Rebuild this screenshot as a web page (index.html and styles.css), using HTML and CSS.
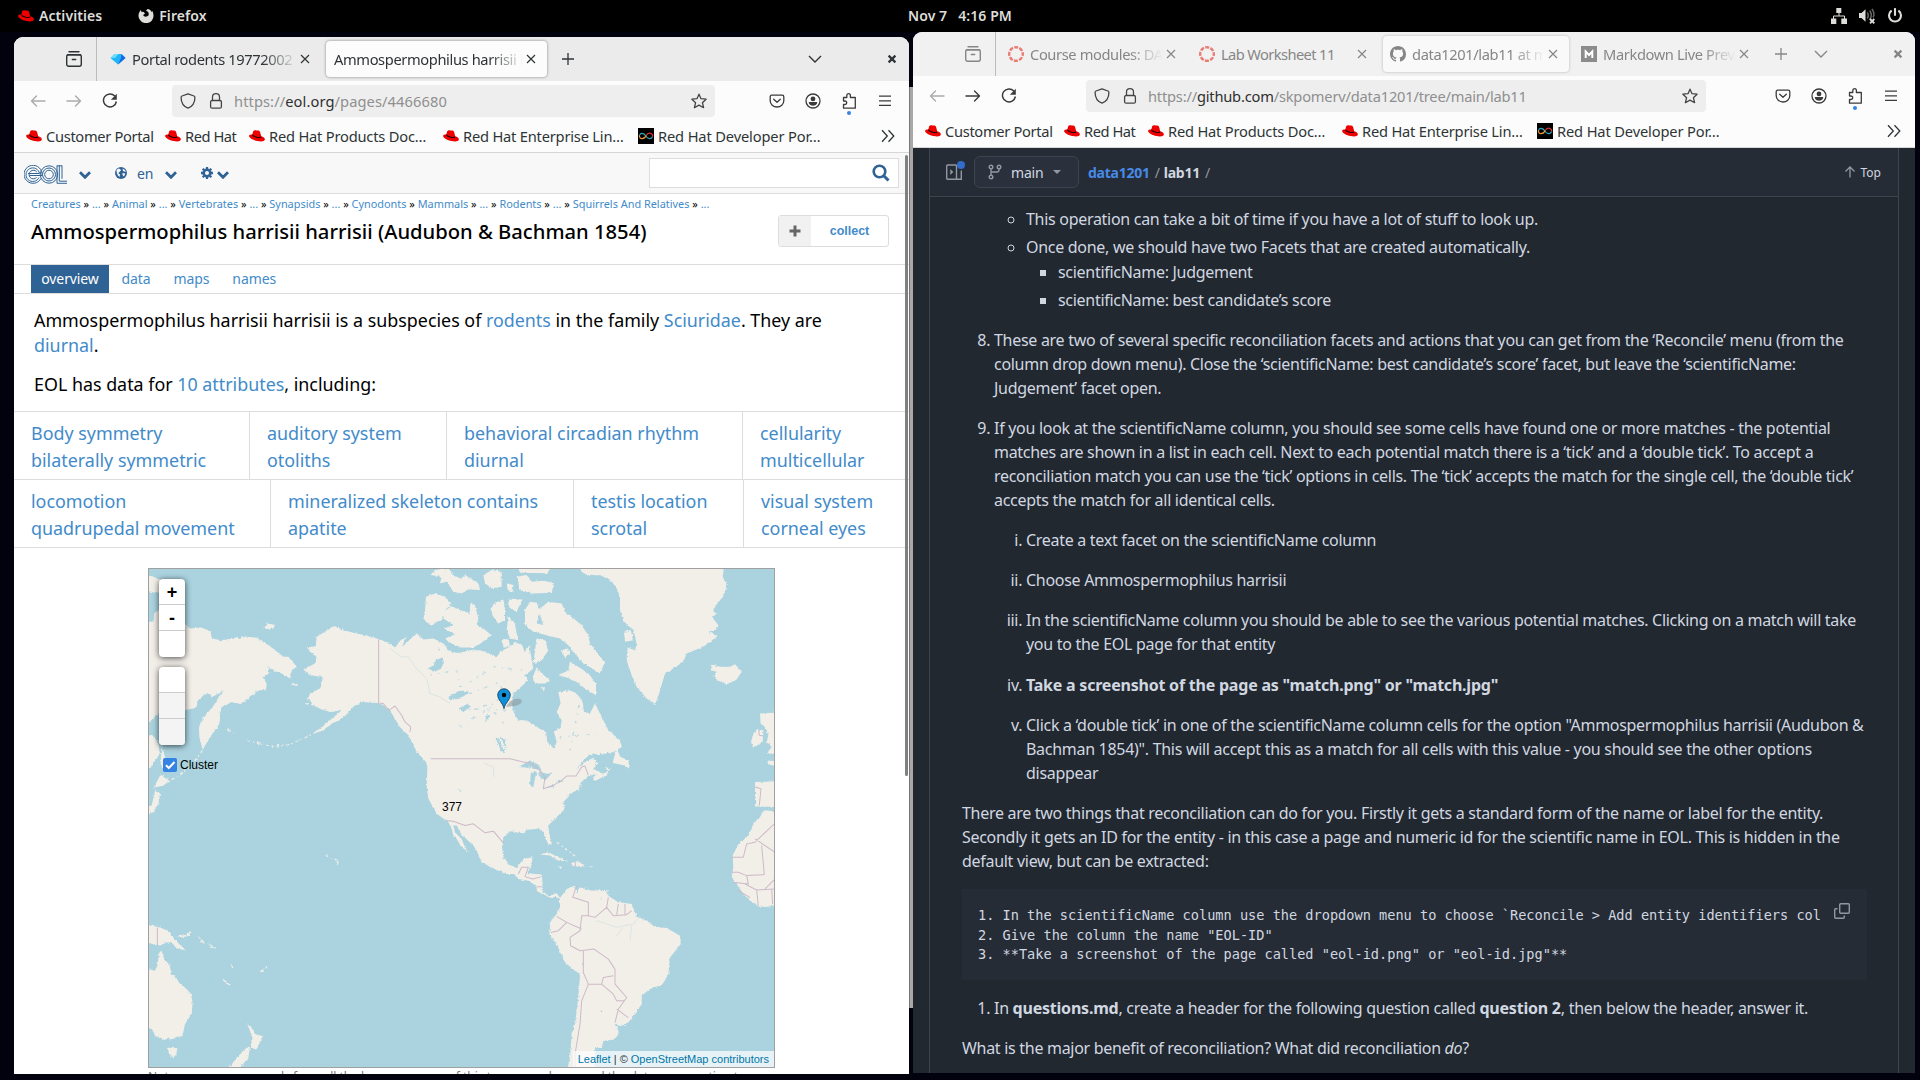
FILE: index.html
```
<!DOCTYPE html>
<html lang="en">
<head>
<meta charset="utf-8">
<title>Desktop</title>
<link rel="stylesheet" href="styles.css">
</head>
<body>
<svg class="defs" width="0" height="0" aria-hidden="true">
  <symbol id="hat" viewBox="0 0 16 16"><path fill="#e00" d="M4.2 3.3C5 2 6.300 2.200 7.600 2.600c1.200-.4 2.900-.1 3.500 1.300l1.100 4.300c2.200.6 3.800 1.900 3.700 3.400-.2 2-3.800 2.300-7.300 1.500C4.500 12.200.2 9.900.1 7.900 0 6.700 1.500 6.500 3.300 6.500z"/><path fill="none" stroke="#200" stroke-width="1.100" d="M3.300 6.700c.6 1.600 6.400 3.900 8.900 2.300"/></symbol>
  <symbol id="view" viewBox="0 0 16 16"><path fill="none" stroke="currentColor" stroke-width="1.400" stroke-linecap="round" d="M3 .8h10M1.500 3.700h13M6.300 8.500h3.400"/><rect x=".7" y="3.700" width="14.600" height="11.600" rx="2" fill="none" stroke="currentColor" stroke-width="1.400"/></symbol>
  <symbol id="x" viewBox="0 0 16 16"><path fill="none" stroke="currentColor" stroke-width="1.150" d="M4 4l8 8M12 4l-8 8"/></symbol>
  <symbol id="xb" viewBox="0 0 16 16"><path fill="none" stroke="currentColor" stroke-width="2.200" d="M4.600 4.600l6.800 6.800M11.400 4.600l-6.800 6.800"/></symbol>
  <symbol id="plus" viewBox="0 0 16 16"><path fill="none" stroke="currentColor" stroke-width="1.300" d="M8 2v12M2 8h12"/></symbol>
  <symbol id="chev" viewBox="0 0 16 16"><path fill="none" stroke="currentColor" stroke-width="1.400" d="M2 5l6 6 6-6"/></symbol>
  <symbol id="back" viewBox="0 0 16 16"><path fill="none" stroke="currentColor" stroke-width="1.400" stroke-linejoin="round" stroke-linecap="round" d="M15 8H1.500M6.500 3l-5 5 5 5"/></symbol>
  <symbol id="fwd" viewBox="0 0 16 16"><path fill="none" stroke="currentColor" stroke-width="1.400" stroke-linejoin="round" stroke-linecap="round" d="M1 8h13.500M9.500 3l5 5-5 5"/></symbol>
  <symbol id="reload" viewBox="0 0 16 16"><path fill="none" stroke="currentColor" stroke-width="1.500" d="M12.800 3A6.500 6.500 0 1 0 14.400 8.500"/><path fill="currentColor" d="M14.800.8v6.000H8.800z"/></symbol>
  <symbol id="shield" viewBox="0 0 16 16"><path fill="none" stroke="currentColor" stroke-width="1.300" stroke-linejoin="round" d="M8 .8l6 2.200c.8.3.9.8.9 1.500 0 4-1.700 8.700-6.900 10.700C2.800 13.200 1.100 8.500 1.100 4.500c0-.7.1-1.200.9-1.500z"/></symbol>
  <symbol id="lock" viewBox="0 0 16 16"><rect x="2.600" y="7.500" width="10.800" height="7.700" rx="1.500" fill="none" stroke="currentColor" stroke-width="1.300"/><path fill="none" stroke="currentColor" stroke-width="1.300" d="M4.500 7.500V4a3.500 3.300 0 0 1 7 0v3.500"/></symbol>
  <symbol id="star" viewBox="0 0 16 16"><path fill="none" stroke="currentColor" stroke-width="1.300" stroke-linejoin="round" d="M8 1.200l2 4.500 5.100.5-3.700 3.500 1.200 5L8 12.100l-4.600 2.600 1.200-5L.9 6.200 6 5.700z"/></symbol>
  <symbol id="pocket" viewBox="0 0 16 16"><path fill="none" stroke="currentColor" stroke-width="1.300" stroke-linecap="round" stroke-linejoin="round" d="M2.700 2.200h10.600c1 0 1.500.6 1.500 1.500v4a6.800 6.300 0 0 1-13.600 0v-4c0-.9.500-1.500 1.500-1.500zM4.700 6.200L8 9.300l3.300-3.100"/></symbol>
  <symbol id="acct" viewBox="0 0 16 16"><circle cx="8" cy="8" r="7" fill="none" stroke="currentColor" stroke-width="1.300"/><circle cx="8" cy="5.900" r="2.400" fill="currentColor"/><path fill="currentColor" d="M3.700 9.800c0-.5.300-.7.700-.7h7.200c.4 0 .7.200.7.700-.5 1.700-2.300 3-4.300 3s-3.800-1.300-4.300-3z"/></symbol>
  <symbol id="ext" viewBox="0 0 16 16"><path fill="none" stroke="currentColor" stroke-width="1.300" stroke-linejoin="round" d="M2.500 4.500h3.300V2.700a1.700 1.900 0 0 1 3.600 0v1.800h4.900v10.700H2.500v-3.700h1.400a1.800 1.700 0 0 0 0-3.500H2.500z"/></symbol>
  <symbol id="menu" viewBox="0 0 16 16"><path stroke="currentColor" stroke-width="1.300" d="M2 3.200h12M2 7.800h12M2 12.400h12"/></symbol>
  <symbol id="more" viewBox="0 0 16 16"><path fill="none" stroke="currentColor" stroke-width="1.300" d="M2 2.300l5.300 5.700L2 13.700M8.500 2.300l5.300 5.700-5.300 5.700"/></symbol>
  <symbol id="dev" viewBox="0 0 16 16"><path fill="#000" d="M0 0h16v16H0z"/><path fill="none" stroke="#d33" stroke-width="1.200" d="M8.200 7.500C9.500 5 11 5 12.500 5.300c1.600.5 2.400 2 2 3.400"/><path fill="none" stroke="#3ab" stroke-width="1.200" d="M8 8.300c1.500 2.700 5.800 3.300 6.500.4M1.500 7.500C2 4.700 5.800 4.500 8 8.300"/><path fill="none" stroke="#e93" stroke-width="1.200" d="M1.400 7.300c-.2 4.400 4.800 4.500 6.800.2"/></symbol>
  <symbol id="canvas" viewBox="0 0 16 16"><circle cx="8" cy="8" r="6.800" fill="none" stroke="#ea7c76" stroke-width="2.400" stroke-dasharray="4 1.340" stroke-dashoffset="2"/></symbol>
  <symbol id="github" viewBox="0 0 16 16"><path fill="currentColor" d="M8 0C3.580 0 0 3.580 0 8c0 3.540 2.290 6.530 5.470 7.590.4.070.55-.17.55-.38 0-.19-.01-.82-.01-1.490-2.010.37-2.530-.49-2.690-.94-.09-.23-.48-.94-.82-1.130-.28-.15-.68-.52-.01-.53.63-.01 1.080.58 1.230.82.72 1.210 1.870.87 2.330.66.07-.52.28-.87.51-1.070-1.780-.2-3.640-.89-3.640-3.950 0-.87.31-1.590.82-2.150-.08-.2-.36-1.020.08-2.120 0 0 .67-.21 2.200.82.64-.18 1.320-.27 2-.27s1.360.09 2 .27c1.530-1.040 2.200-.82 2.200-.82.44 1.100.16 1.920.08 2.120.51.56.82 1.270.82 2.150 0 3.070-1.870 3.750-3.650 3.950.29.25.54.73.54 1.480 0 1.070-.01 1.930-.01 2.200 0 .21.15.46.55.38A8.010 8.010 0 0 0 16 8c0-4.420-3.580-8-8-8z"/></symbol>
  <symbol id="fachev" viewBox="0 0 12 8"><path fill="none" stroke="currentColor" stroke-width="2.800" d="M1 1.300l5 5 5-5"/></symbol>
</svg>

<header class="topbar">
  <div class="tb-left"><svg class="i16"><use href="#hat"/></svg><span>Activities</span>
    <svg class="i16 fox" viewBox="0 0 16 16"><path fill="#deddda" d="M2.500 2l1 1.800 2.300.2L7 5.500 5.200 7c.5 2 3.800 2.300 5.200.6C11.500 5 9.800 3.200 8 2.800L9.500.9c2 .3 3.600 1.300 4 3l.9-.8c1.700 3.300 1.500 7-1 9.800a7.600 7.600 0 0 1-12.300-2.300C0 8 .5 5.500 1.500 4z"/></svg><span>Firefox</span></div>
  <div class="tb-mid"><span>Nov 7</span><span>4:16 PM</span></div>
  <div class="tb-right">
    <svg class="i16" viewBox="0 0 16 16"><path fill="#deddda" d="M5.300 0h5v5h-5zM0 10.500h5.300V16H0zM10.300 10.500H16V16h-5.700z"/><path fill="none" stroke="#deddda" d="M8 5v3M2.500 11V8h11v3"/></svg>
    <svg class="i16" viewBox="0 0 16 16"><path fill="#deddda" d="M0 5h2.500L6.500 1.200v12.500L2.500 10H0z"/><path fill="none" stroke="#666" stroke-width="1.500" d="M8.300 4.500c1.300 2 1.300 4 0 6M10.700 2.500c2 3 2 6.500 0 9.500M13 .8c2.200 3.500 2 7 1 8.500"/><path stroke="#deddda" stroke-width="1.800" d="M11 11l4.300 4.300M15.300 11L11 15.300"/></svg>
    <svg class="i16" viewBox="0 0 16 16"><path fill="none" stroke="#deddda" stroke-width="2.100" stroke-linecap="round" d="M4 3.100a6 6 0 1 0 8 0M8 1v6"/></svg>
  </div>
</header>

<div class="under"></div>

<section class="win w-left">
  <div class="tabs">
    <div class="view"><svg class="i16"><use href="#view"/></svg></div>
    <div class="tab"><svg class="i16" viewBox="0 0 16 16"><path fill="#1fb6f8" d="M4.500 3h7l4 4L8 13.500.500 7z"/><path fill="#1668e8" d="M11.500 3l4 4L8 13.500 11 7z"/><path fill="#6fdcff" d="M4.500 3h4L5 7H.5z"/></svg><span class="tt">Portal rodents 19772002 scinames</span><svg class="i16"><use href="#x"/></svg></div>
    <div class="tab on"><span class="tt">Ammospermophilus harrisii harrisii</span><svg class="i16"><use href="#x"/></svg></div>
    <svg class="i16 newtab"><use href="#plus"/></svg>
    <div class="ctl"><svg class="i16"><use href="#chev"/></svg><svg class="i16"><use href="#xb"/></svg></div>
  </div>
  <div class="nav">
    <svg class="i16 dim"><use href="#back"/></svg><svg class="i16 dim"><use href="#fwd"/></svg><svg class="i16"><use href="#reload"/></svg>
    <div class="url"><svg class="i16"><use href="#shield"/></svg><svg class="i16"><use href="#lock"/></svg><span>https://<b>eol.org</b>/pages/4466680</span><svg class="i16"><use href="#star"/></svg></div>
    <div class="tools"><svg class="i16"><use href="#pocket"/></svg><svg class="i16"><use href="#acct"/></svg><span class="dot"><svg class="i16"><use href="#ext"/></svg></span><svg class="i16"><use href="#menu"/></svg></div>
  </div>
  <div class="marks">
    <svg class="i16"><use href="#hat"/></svg><span class="m1">Customer Portal</span><svg class="i16"><use href="#hat"/></svg><span class="m2">Red Hat</span><svg class="i16"><use href="#hat"/></svg><span class="m3">Red Hat Products Doc…</span><svg class="i16"><use href="#hat"/></svg><span class="m4">Red Hat Enterprise Lin…</span><svg class="i16"><use href="#dev"/></svg><span class="m5">Red Hat Developer Por…</span><svg class="i16 more"><use href="#more"/></svg>
  </div>
  <main class="eol">
    <div class="eol-top">
      <svg class="logo" viewBox="0 0 43 19" fill="none" stroke="#2f6395"><g stroke-width="1"><path d="M17 13.500A9 9 0 1 1 18 8.500v2H5.500"/><path d="M15 12.500A6.800 6.800 0 1 1 15.500 8.500H4"/><path d="M12.500 12.500A4.300 4.300 0 1 1 12.800 7"/><circle cx="25" cy="9.500" r="8.700"/><circle cx="25" cy="9.500" r="6.500"/><circle cx="25" cy="9.500" r="4.300"/><path d="M33 .5v17.800h10M35.300.5v15.700H43M38 .5v13.300M33 .8h5"/></g></svg>
      <svg class="fc c1"><use href="#fachev"/></svg>
      <svg class="globe" viewBox="0 0 12 12"><circle cx="6" cy="6" r="6" fill="#2f6395"/><path fill="#f8f8f8" d="M1.500 3l2-1.500 1.500.5 1 1.200L4.500 5 3.200 6 5 7.500 4.500 10 3 8.500 1.800 6zM7.500 1.500l2.500 1.500.8 2-1.500-.5L8 4zM7.500 6l2.800.5L9 9.500 7.500 8z"/></svg>
      <span class="en">en</span>
      <svg class="fc c2"><use href="#fachev"/></svg>
      <svg class="gear" viewBox="0 0 12 12"><circle cx="6" cy="6" r="3.300" fill="none" stroke="#2f6395" stroke-width="2.600"/><path stroke="#2f6395" stroke-width="2.300" d="M6 0v2M6 10v2M0 6h2M10 6h2M1.700 1.700l1.400 1.400M8.900 8.900l1.400 1.400M10.300 1.700L8.900 3.100M3.100 8.900l-1.400 1.400"/></svg>
      <svg class="fc c3"><use href="#fachev"/></svg>
      <div class="search"><svg width="18" height="18" viewBox="0 0 18 18" fill="none" stroke="#2f6395"><circle cx="7.500" cy="7.500" r="5.800" stroke-width="2.600"/><path stroke-width="3" d="M11.500 11.500l5 5"/></svg></div>
    </div>
    <p class="crumbs"><a>Creatures</a> » <a>...</a> » <a>Animal</a> » <a>...</a> » <a>Vertebrates</a> » <a>...</a> » <a>Synapsids</a> » <a>...</a> » <a>Cynodonts</a> » <a>Mammals</a> » <a>...</a> » <a>Rodents</a> » <a>...</a> » <a>Squirrels And Relatives</a> » <a>...</a></p>
    <div class="title"><h1>Ammospermophilus harrisii harrisii (Audubon &amp; Bachman 1854)</h1>
      <div class="collect"><span class="cp"><svg width="12" height="12" viewBox="0 0 12 12"><path stroke="#666" stroke-width="3" d="M6 .5v11M.5 6h11"/></svg></span><span class="cl">collect</span></div></div>
    <nav class="sub"><a class="cur">overview</a><a>data</a><a>maps</a><a>names</a></nav>
    <div class="brief"><p>Ammospermophilus harrisii harrisii is a subspecies of <a>rodents</a> in the family <a>Sciuridae</a>. They are<br><a>diurnal</a>.</p><p>EOL has data for <a>10 attributes</a>, including:</p></div>
    <div class="traits r1"><div>Body symmetry<br>bilaterally symmetric</div><div>auditory system<br>otoliths</div><div>behavioral circadian rhythm<br>diurnal</div><div>cellularity<br>multicellular</div></div>
    <div class="traits r2"><div>locomotion<br>quadrupedal movement</div><div>mineralized skeleton contains<br>apatite</div><div>testis location<br>scrotal</div><div>visual system<br>corneal eyes</div></div>
    <div class="map">
      <svg class="land" viewBox="27 27 1875 1491" preserveAspectRatio="none">
        <defs><filter id="coast" x="-5%" y="-5%" width="110%" height="110%"><feTurbulence type="fractalNoise" baseFrequency=".14" numOctaves="3" seed="4"/><feDisplacementMap in="SourceGraphic" scale="9" xChannelSelector="R" yChannelSelector="G"/></filter></defs>
        <g filter="url(#coast)">
        <g fill="#f2efe9">
          <path d="M0 190L40 185 42 160 60 150 135 192 150 205 185 202 212 215 215 235 245 240 280 235 290 228 300 240 305 228 350 233 395 262 430 290 445 290 470 320 455 330 450 355 425 340 400 330 385 318 388 340 370 350 380 372 378 388 350 392 325 415 300 432 275 425 262 432 245 440 240 462 238 490 225 510 205 540 188 568 178 530 177 500 190 470 215 445 240 405 252 390 235 400 215 412 210 400 190 405 172 425 170 442 135 450 60 455 0 510z"/>
          <path d="M0 40L40 50 62 60 65 95 40 98 0 85zM0 535L40 525 55 550 60 580 45 600 35 620 0 640zM65 555L78 600 75 635 62 610zM62 642L88 662 70 675 42 682 55 655zM45 692L60 700 55 730 40 755 20 762 0 790 0 745 35 735zM372 200L385 190 405 195 400 205 378 207zM455 368l20 5-2 5-20-5zM495 430l12-2-2 8z"/>
          <path d="M500 262L527 258 530 230 560 212 583 198 610 210 640 218 690 228 718 238 740 245 765 262 782 240 800 228 785 258 800 248 830 218 850 238 880 235 910 250 925 270 940 278 960 278 990 270 1020 270 1050 282 1070 290 1085 272 1110 260 1125 245 1145 255 1155 275 1168 255 1175 300 1180 325 1155 345 1165 360 1145 378 1120 400 1115 430 1122 460 1135 480 1160 480 1200 505 1218 515 1222 545 1242 565 1250 545 1242 515 1262 500 1265 480 1250 455 1262 430 1255 395 1290 390 1310 400 1328 425 1332 455 1350 460 1365 430 1385 470 1405 510 1440 540 1445 560 1420 575 1390 580 1350 582 1330 600 1310 628 1335 605 1360 592 1372 610 1360 625 1390 640 1408 630 1398 645 1365 662 1358 652 1372 640 1345 647 1322 667 1320 685 1290 700 1270 725 1275 745 1245 775 1225 795 1228 820 1235 850 1225 852 1210 815 1195 805 1160 808 1150 818 1110 812 1090 830 1086 860 1090 890 1105 912 1130 922 1150 895 1177 890 1175 915 1162 938 1205 942 1208 965 1205 990 1225 1005 1250 998 1260 1012 1280 985 1305 975 1310 998 1320 978 1350 990 1395 988 1405 1005 1435 1025 1475 1030 1490 1068 1520 1080 1545 1098 1580 1102 1620 1125 1622 1150 1590 1190 1585 1240 1565 1275 1535 1280 1505 1305 1505 1330 1480 1365 1460 1390 1440 1395 1423 1390 1435 1405 1435 1420 1425 1435 1390 1440 1385 1460 1365 1462 1365 1560 1275 1560 1290 1490 1295 1420 1305 1390 1315 1310 1320 1240 1300 1225 1275 1205 1250 1150 1228 1120 1232 1080 1250 1060 1260 1040 1260 1015 1245 1008 1235 1012 1215 1005 1190 990 1190 975 1165 960 1135 955 1125 940 1100 940 1070 928 1025 905 1010 870 1000 855 985 840 965 825 950 795 940 795 945 815 965 835 975 860 987 875 965 860 950 835 940 825 935 805 925 785 905 770 890 760 885 750 865 715 860 680 862 620 858 605 830 575 815 545 800 520 780 500 765 475 750 450 730 435 715 428 665 425 640 440 620 462 600 480 580 487 545 512 520 520 570 480 605 450 570 455 545 448 520 435 505 415 510 400 540 385 545 370 548 350 510 345 490 328 525 310 530 290 510 275z"/>
          <path d="M858 110L885 100 915 110 935 132 915 150 905 180 890 185 875 198 850 178 855 150zM910 155L935 138 960 150 990 160 1000 140 1005 190 1030 205 1055 225 1030 245 1000 262 960 262 925 245 915 235 945 222 912 205 940 195 910 175zM872 45L885 30 925 25 940 45 970 60 990 85 965 100 940 95 920 65 900 70 905 50zM990 130L1005 135 1015 175 1008 200 990 170zM1050 150L1065 128 1090 118 1095 145 1095 180 1075 190 1060 170zM1105 115L1148 118 1130 155 1105 140zM1105 170L1125 190 1130 220 1135 240 1110 235 1100 210zM1130 50L1160 45 1175 65 1210 62 1242 70 1235 98 1175 100 1138 90 1135 65zM1030 45L1055 30 1085 35 1085 80 1055 85 1035 70zM960 60L975 45 1015 70 1020 90 975 88zM1100 70l20 5-2 20-15-5zM1130 10L1245 10 1220 40 1140 38zM1085 240l20-5 5 20-18 8z"/>
          <path d="M1155 150L1170 125 1190 128 1200 150 1190 190 1210 195 1195 150 1225 125 1265 130 1275 155 1300 175 1325 195 1345 225 1350 250 1380 290 1395 305 1380 340 1355 325 1330 310 1305 280 1285 255 1260 235 1220 225 1180 215 1155 195zM1190 235L1215 240 1225 270 1205 300 1180 310 1185 270zM1190 322L1205 340 1230 360 1215 370 1185 370 1178 350zM1255 345L1285 330 1290 305 1315 320 1345 340 1368 370 1368 405 1335 385 1310 365 1280 352zM1262 270l20-5 8 15-15 12zM1205 380l10 2-3 10z"/>
          <path d="M1310 0L1325 35 1345 48 1380 45 1410 60 1430 85 1440 110 1440 150 1450 185 1480 210 1490 250 1485 270 1462 262 1460 300 1475 345 1490 380 1520 415 1545 433 1557 400 1575 340 1600 325 1630 305 1640 280 1690 260 1732 228 1705 215 1730 208 1735 195 1715 170 1728 165 1720 150 1735 125 1750 110 1760 75 1748 50 1755 0zM1452 215l20-5 8 30-25 5z"/>
          <path d="M1715 312L1740 320 1770 320 1785 312 1805 335 1790 358 1760 372 1735 362 1720 348 1730 335 1712 330zM1860 460L1930 455 1930 580 1880 580 1895 560 1880 545 1885 525 1875 500 1862 490zM1840 520L1850 508 1870 510 1868 545 1840 562 1833 545zM1880 600l50 5v15l-45-8zM1845 665L1930 662 1930 740 1845 738zM1870 750L1880 750 1930 755 1930 1035 1860 1038 1830 1020 1810 1000 1790 970 1775 950 1780 920 1778 885 1795 850 1820 830 1835 805 1842 785 1860 770z"/>
          <path d="M1430 562L1418 608 1455 615 1468 625 1465 600 1440 588zM1395 620l18 5-10 8zM1200 882L1225 875 1255 890 1285 903 1255 900 1230 885zM1298 905L1320 905 1335 915 1310 918 1295 915zM1250 917l18 2-5 3zM1345 917l16 1-8 3zM1395 990l8-2v6z"/>
          <path d="M0 1090L30 1093 60 1100 85 1110 95 1125 108 1140 135 1168 110 1163 95 1145 75 1145 65 1155 30 1148 0 1140zM108 1127L140 1122 152 1110 148 1125 125 1130zM0 1218L45 1230 52 1215 58 1175 65 1170 75 1200 88 1210 95 1240 125 1270 152 1298 158 1325 155 1355 135 1390 127 1425 105 1430 95 1438 85 1430 75 1437 45 1425 38 1405 0 1392zM83 1460L113 1462 110 1480 98 1490 88 1480zM322 1390L335 1400 345 1420 370 1425 360 1445 345 1467 332 1455 338 1430zM330 1460L325 1490 300 1520 268 1520 290 1490 318 1460zM248 1253L272 1272 268 1274 250 1260zM362 1229l8-2 2 6-8 1zM372 1222l10-4-2 5zM170 1122l25 25-5 2zM200 1145l30 20-10-2zM590 902l8 5-7 4zM270 1205l10 15-4 2z"/>
        </g>
        <path fill="none" stroke="#f2efe9" stroke-width="4" stroke-dasharray="9 10 4 7" d="M555 500L500 530 450 552 400 558 320 540M188 570L150 620 85 665M556 884L595 900M264 508l20 10M1250 845l60 45"/>
        <g fill="#aad3df">
          <path d="M862 325l20-10 5-15 20-8 5 15-10 20-20 8zM925 410l35-20 30 5-30 20-30 5zM955 445l30-15 5 10-20 15zM895 260l5 10-5 2zM955 685l8 5-2 6zM1065 530l10 5 20 40-8 3zM1080 528l15 10 5 30-10-20zM1135 620L1170 600 1195 612 1205 630 1170 622zM1172 640L1190 632 1180 680 1170 675zM1195 635L1225 640 1240 635 1215 660 1200 650zM1212 682L1245 672 1240 680zM1245 665l25-8-5 8zM1040 462l10 5-15 20z"/>
          <path d="M1330 1210l-5-8 3 12zM1381 1348l7 3-4 4zM1380 1012l5-2-2 8z"/>
        </g>
        <path fill="none" stroke="#aad3df" stroke-width="4" opacity=".75" stroke-dasharray="6 20 3 15 12 27" d="M870 345L950 330 960 380 1000 360 1060 320 1150 330M990 400L1090 360 1070 430 1010 440M960 500L1050 440 1100 500M1260 530L1380 520M1290 570L1320 420M960 445L1110 450"/>
        </g>
        <path fill="none" stroke="#cdb9c8" stroke-width="3" stroke-linejoin="round" d="M716 238V428L730 430 747 450 765 437 785 465 795 485 812 500 810 515M872 595H1110L1150 605 1170 607 1200 630 1215 650 1210 685 1240 675 1265 660 1280 647 1308 647 1325 620 1335 617 1345 645M920 781L940 782 975 795 1000 790 1035 817 1060 812 1090 847M52 1100V1153M1135 940L1145 920 1165 920 1155 948 1178 955 1205 948M1190 978l15 0M1310 975L1298 1010 1345 1025 1345 1065 1325 1065 1320 1110 1290 1130 1292 1155 1320 1170 1362 1165 1405 1195 1425 1225 1425 1270 1460 1310 1435 1345 1425 1385M1345 1065L1365 1070 1400 1040 1405 1010M1400 1040L1420 1065 1460 1062 1475 1050M1435 1030L1430 1062M1455 1030V1062M1250 1067L1280 1085 1255 1110 1232 1115M1280 1085L1325 1105M1330 1170L1330 1235 1345 1270 1385 1270 1420 1300 1430 1320 1455 1320M1385 1270L1390 1250 1420 1245M1345 1270L1325 1320 1320 1390 1305 1480 1305 1520M1430 1345L1465 1370M1305 905l2 12M1775 890H1810L1820 850 1845 845 1905 788M1845 835L1905 875M1865 855L1873 942 1820 945 1795 935 1775 935M1815 970L1850 988 1905 985M1820 945L1825 970 1780 965M1850 988L1855 1035M1795 990L1830 1010M1875 985L1905 955M1895 985L1898 1030M1845 680L1863 685 1858 735M1856 510l2 15 10 2"/>
        <path fill="none" stroke="#cfe0e0" stroke-width="2" d="M750 265L785 290 805 290 825 320 860 355 870 400 900 410 930 430M1370 1080L1430 1100 1480 1090 1500 1065M1475 1095L1470 1140M1430 1125L1450 1100M1030 607L1060 620 1062 650"/>
      </svg>
      <div class="zoomer"><span>+</span><span>-</span><span></span></div>
      <div class="zoomer z2"><span></span><span></span><span></span></div>
      <div class="cluster"><svg width="14" height="14" viewBox="0 0 14 14"><rect width="14" height="14" rx="1.800" fill="#3584e4"/><path fill="none" stroke="#fff" stroke-width="2" d="M3 7.200l2.800 2.800L11.500 4"/></svg>Cluster</div>
      <svg class="pin" width="28" height="22" viewBox="0 0 28 22"><path fill="#8a9a9f" opacity=".6" d="M9 19c3-6 8-9 14-8 4 2 1 6-6 7z"/><path fill="#0e90db" stroke="#1d4a66" d="M7 20.500C6 15 .8 12 .8 7a6.200 6.200 0 0 1 12.400 0c0 5-5.200 8-6.200 13.500z"/><circle cx="7" cy="7" r="2.200" fill="#000"/></svg>
      <span class="n377">377</span>
      <div class="attr"><a>Leaflet</a> | © <a>OpenStreetMap contributors</a></div>
    </div>
    <p class="cap">Note: occurrence records from all the known sources of this taxon are shown and the dots are an estimate</p>
  </main>
  <i class="scroll"></i>
</section>

<section class="win w-right">
  <div class="tabs">
    <div class="view"><svg class="i16"><use href="#view"/></svg></div>
    <div class="tab"><svg class="i16"><use href="#canvas"/></svg><span class="tt">Course modules: DATA 1201</span><svg class="i16"><use href="#x"/></svg></div>
    <div class="tab"><svg class="i16"><use href="#canvas"/></svg><span class="tt nofade">Lab Worksheet 11</span><svg class="i16"><use href="#x"/></svg></div>
    <div class="tab on"><svg class="i16"><use href="#github"/></svg><span class="tt">data1201/lab11 at main</span><svg class="i16"><use href="#x"/></svg></div>
    <div class="tab"><svg class="i16" viewBox="0 0 16 16"><path fill="#8b8b8b" d="M0 0h16v16H0z"/><path fill="none" stroke="#fff" stroke-width="2" d="M4.700 12V5.500L8 9l3.300-3.500V12"/></svg><span class="tt">Markdown Live Preview</span><svg class="i16"><use href="#x"/></svg></div>
    <svg class="i16 newtab"><use href="#plus"/></svg>
    <div class="ctl"><svg class="i16"><use href="#chev"/></svg><svg class="i16"><use href="#xb"/></svg></div>
  </div>
  <div class="nav">
    <svg class="i16 dim"><use href="#back"/></svg><svg class="i16"><use href="#fwd"/></svg><svg class="i16"><use href="#reload"/></svg>
    <div class="url"><svg class="i16"><use href="#shield"/></svg><svg class="i16"><use href="#lock"/></svg><span>https://<b>github.com</b>/skpomerv/data1201/tree/main/lab11</span><svg class="i16"><use href="#star"/></svg></div>
    <div class="tools"><svg class="i16"><use href="#pocket"/></svg><svg class="i16"><use href="#acct"/></svg><span class="dot"><svg class="i16"><use href="#ext"/></svg></span><svg class="i16"><use href="#menu"/></svg></div>
  </div>
  <div class="marks">
    <svg class="i16"><use href="#hat"/></svg><span class="m1">Customer Portal</span><svg class="i16"><use href="#hat"/></svg><span class="m2">Red Hat</span><svg class="i16"><use href="#hat"/></svg><span class="m3">Red Hat Products Doc…</span><svg class="i16"><use href="#hat"/></svg><span class="m4">Red Hat Enterprise Lin…</span><svg class="i16"><use href="#dev"/></svg><span class="m5">Red Hat Developer Por…</span><svg class="i16 more"><use href="#more"/></svg>
  </div>
  <main class="gh">
    <div class="gh-box">
      <div class="gh-top">
        <span class="tree"><svg class="i16" viewBox="0 0 16 16" fill="none" stroke="#9198a1" stroke-width="1.400"><path d="M10.500 1H1.700C1 1 .7 1.300.7 2v12.600c0 .4.300.7.700.7h13.900V6.500M10.500 1v14"/><path fill="#9198a1" stroke="none" d="M4.300 5l3 3-3 3z"/></svg></span>
        <span class="branch"><svg width="14" height="16" viewBox="0 0 14 16" fill="none" stroke="#9198a1" stroke-width="1.400"><circle cx="3" cy="3" r="1.800"/><circle cx="3" cy="13" r="1.800"/><circle cx="11" cy="3" r="1.800"/><path d="M3 4.800v6.400M11 4.800v1.500c0 1.200-.6 1.700-1.700 1.700H3"/></svg><span>main</span><i></i></span>
        <a>data1201</a><span class="sl">/</span><b>lab11</b><span class="sl">/</span>
        <span class="top"><svg width="12" height="12" viewBox="0 0 12 12" fill="none" stroke="#9198a1" stroke-width="1.300"><path d="M6 11.500V1M1.500 5.500L6 1l4.500 4.500"/></svg>Top</span>
      </div>
      <article class="md">
        <ul class="u1"><li>This operation can take a bit of time if you have a lot of stuff to look up.</li>
          <li>Once done, we should have two Facets that are created automatically.
            <ul class="u2"><li>scientificName: Judgement</li><li>scientificName: best candidate’s score</li></ul></li></ul>
        <ol class="o1" start="8"><li>These are two of several specific reconciliation facets and actions that you can get from the ‘Reconcile’ menu (from the<br>column drop down menu). Close the ‘scientificName: best candidate’s score’ facet, but leave the ‘scientificName:<br>Judgement’ facet open.</li>
          <li>If you look at the scientificName column, you should see some cells have found one or more matches - the potential<br>matches are shown in a list in each cell. Next to each potential match there is a ‘tick’ and a ‘double tick’. To accept a<br>reconciliation match you can use the ‘tick’ options in cells. The ‘tick’ accepts the match for the single cell, the ‘double tick’<br>accepts the match for all identical cells.
            <ol class="o2"><li>Create a text facet on the scientificName column</li><li>Choose Ammospermophilus harrisii</li><li>In the scientificName column you should be able to see the various potential matches. Clicking on a match will take<br>you to the EOL page for that entity</li><li class="sp"><b>Take a screenshot of the page as "match.png" or "match.jpg"</b></li><li>Click a ‘double tick’ in one of the scientificName column cells for the option "Ammospermophilus harrisii (Audubon &amp;<br>Bachman 1854)". This will accept this as a match for all cells with this value - you should see the other options<br>disappear</li></ol></li></ol>
        <p>There are two things that reconciliation can do for you. Firstly it gets a standard form of the name or label for the entity.<br>Secondly it gets an ID for the entity - in this case a page and numeric id for the scientific name in EOL. This is hidden in the<br>default view, but can be extracted:</p>
        <div class="code"><pre>1. In the scientificName column use the dropdown menu to choose `Reconcile &gt; Add entity identifiers column`
2. Give the column the name "EOL-ID"
3. **Take a screenshot of the page called "eol-id.png" or "eol-id.jpg"**</pre><svg class="i16" viewBox="0 0 16 16" fill="none" stroke="#9198a1" stroke-width="1.400"><rect x="5.700" y=".7" width="9.600" height="9.600" rx="1"/><path d="M3.500 5.700H1.700c-.6 0-1 .4-1 1v7.600c0 .6.400 1 1 1h7.600c.6 0 1-.4 1-1v-1.800"/></svg></div>
        <ol class="o1"><li>In <b>questions.md</b>, create a header for the following question called <b>question 2</b>, then below the header, answer it.</li></ol>
        <p>What is the major benefit of reconciliation? What did reconciliation <em>do</em>?</p>
      </article>
    </div>
  </main>
</section>
</body>
</html>
```
FILE: styles.css
```
* { box-sizing: border-box; }
body { margin: 0; width: 1920px; height: 1080px; overflow: hidden; position: relative; background: #02020f; font-family: "Noto Sans", sans-serif; font-size: 14.67px; color: #2e3436; }
.defs { position: absolute; }
svg { display: block; flex: none; }
.i16 { width: 16px; height: 16px; flex: none; }
p, h1, ul, ol, pre { margin: 0; padding: 0; }
a { color: #428bca; text-decoration: none; }

.topbar { height: 32px; background: #000; color: #deddda; font-weight: 600; font-size: 14px; line-height: 20px; padding-bottom: 1px; display: grid; grid-template-columns: 1fr auto 1fr; align-items: center; letter-spacing: .08px; }
.tb-left { display: flex; align-items: center; padding-left: 18px; gap: 5px; }
.tb-left .fox { margin-left: 31px; }
.tb-mid { display: flex; gap: 11px; }
.tb-right { display: flex; justify-content: flex-end; gap: 12px; padding-right: 17px; }

.under { position: absolute; left: 909px; top: 87px; width: 4px; height: 921px; background: #aaa7a4; border-left: 1px solid #777; }
.win { position: absolute; display: flex; flex-direction: column; overflow: hidden; border-radius: 9px 9px 0 0; background: #fcfcfc; }
.w-left { left: 14px; top: 37px; width: 895px; height: 1037px; }
.w-right { left: 913px; top: 32px; width: 1002px; height: 1041px; }

.tabs { height: 44px; flex: none; background: #ebebeb; display: flex; align-items: center; }
.view { width: 83px; height: 44px; padding-left: 52px; display: flex; align-items: center; border-right: 1px solid #bcbcbc; }
.tab { height: 36px; display: flex; align-items: center; padding: 0 8px; border-radius: 4px; letter-spacing: -.38px; }
.tab.on { background: #fcfcfc; box-shadow: 0 0 3px rgba(0,0,0,.45); }
.tt { flex: 1; white-space: nowrap; overflow: hidden; margin-left: 6px; -webkit-mask-image: linear-gradient(90deg, #000 calc(100% - 34px), transparent); mask-image: linear-gradient(90deg, #000 calc(100% - 34px), transparent); }
.tt.nofade { -webkit-mask-image: none; mask-image: none; letter-spacing: -.6px; }
.w-left .tab { width: 221px; margin-left: 5px; }
.w-left .view + .tab { width: 219px; }
.w-left .tab.on .tt { margin-left: 0; }
.newtab { margin-left: 13px; }
.ctl { margin-left: auto; display: flex; gap: 61px; padding-right: 9px; }
.w-right .tabs { background: #f1f1f1; color: #868686; }
.w-right .tab { width: 186px; margin-left: 5px; padding: 0 8px 0 7px; }
.w-right .tab.on { background: #f9f9f9; box-shadow: 0 0 3px rgba(0,0,0,.25); }
.w-right .newtab { margin-left: 13px; }

.nav { height: 40px; flex: none; display: flex; align-items: center; padding: 0 16px; gap: 20px; color: #3b3b3b; }
.dim { color: #aaa; }
.url { height: 32px; background: #eee; border-radius: 4px; display: flex; align-items: center; padding: 0 8px; gap: 12px; color: #8f8f8f; }
.url svg { color: #444; }
.url span { flex: 1; white-space: nowrap; margin-left: -2px; }
.url b { font-weight: 400; color: #2e2e2e; }
.w-left .url { width: 543px; margin-left: 34px; letter-spacing: .09px; }
.w-right .url { width: 620px; margin-left: 49px; letter-spacing: -.2px; }
.tools { margin-left: auto; display: flex; gap: 20px; }
.dot { position: relative; }
.dot::after { content: ""; position: absolute; left: 6px; top: 18px; width: 4px; height: 4px; border-radius: 2px; background: #3584e4; }
.marks { height: 32px; flex: none; display: flex; align-items: center; padding: 0 13px 1px 12px; border-bottom: 1px solid #d6d6d6; white-space: nowrap; letter-spacing: -.2px; }
.marks span { margin-left: 4px; flex: none; }
.m1 { width: 119px; letter-spacing: -.32px; } .m2 { width: 64px; letter-spacing: -.45px; } .m3 { width: 174px; } .m4 { width: 175px; } .m5 { width: 170px; letter-spacing: -.14px; }
.more { margin-left: auto; }

.eol { flex: 1; min-height: 0; background: #fff; color: #000; overflow: hidden; }
.eol-top { height: 41px; background: #f8f8f8; border-bottom: 1px solid #ddd; display: flex; align-items: center; color: #2f6395; padding: 0 10px; }
.logo { width: 43px; height: 19px; margin-top: 2px; }
.fc { width: 12px; height: 8px; margin-top: 3px; }
.c1 { margin-left: 12px; }
.globe { width: 12px; height: 12px; margin-left: 24px; }
.en { margin-left: 10px; width: 17px; font-size: 14px; letter-spacing: -.2px; }
.c2 { margin-left: 11px; }
.gear { width: 12px; height: 12px; margin-left: 24px; }
.c3 { margin-left: 4px; }
.search { margin-left: auto; width: 250px; height: 30px; background: #fff; border: 1px solid #ddd; display: flex; align-items: center; justify-content: flex-end; padding-right: 8px; }
.crumbs { font-size: 10.900px; line-height: 20px; height: 20px; padding-left: 17px; white-space: nowrap; }
.title { height: 50px; display: flex; padding: 0 20px 0 17px; justify-content: space-between; }
.title h1 { font-size: 20.200px; line-height: 27px; font-weight: 500; margin-top: 4px; white-space: nowrap; }
.collect { width: 111px; height: 32px; margin-top: 1px; border: 1px solid #ddd; border-radius: 3px; display: flex; }
.cp { width: 32px; background: #f1f1f1; display: grid; place-items: center; }
.cl { flex: 1; text-align: center; font: bold 12.500px/30px "Liberation Sans", sans-serif; color: #428bca; }
.sub { height: 30px; border-top: 1px solid #ddd; border-bottom: 1px solid #ddd; padding-left: 17px; display: flex; font-size: 14px; line-height: 28px; letter-spacing: -.1px; }
.sub a { padding: 0 11.500px; }
.sub a.cur { background: #2f6395; color: #fff; padding: 0; width: 78px; text-align: center; margin-right: 1px; }
.brief { height: 117px; padding: 14px 20px 0; font-size: 17.870px; line-height: 25px; white-space: nowrap; }
.brief p { margin-bottom: 14px; }
.traits { display: grid; height: 68px; border-top: 1px solid #ddd; font-size: 17.900px; line-height: 27px; color: #428bca; white-space: nowrap; }
.traits div { padding: 8px 0 0 17px; border-right: 1px solid #ddd; }
.traits div:last-child { border-right: 0; }
.r1 { grid-template-columns: 236px 197px 296px 1fr; }
.r2 { grid-template-columns: 257px 303px 170px 1fr; height: 69px; border-bottom: 1px solid #ddd; }
.map { position: relative; margin: 20px 0 0 134px; width: 627px; height: 500px; border: 1px solid #a0a0a0; background: #aad3df; overflow: hidden; font: 12px "Liberation Sans", sans-serif; }
.land { width: 625px; height: 498px; }
.zoomer { position: absolute; left: 10px; top: 10px; width: 26px; border-radius: 4px; background: #fff; box-shadow: 0 1px 6px rgba(0,0,0,.7); overflow: hidden; }
.zoomer span { display: block; height: 26px; border-bottom: 1px solid #ccc; font: bold 18px/26px "Liberation Sans", sans-serif; text-align: center; }
.zoomer span:last-child { border: 0; }
.z2 { top: 98px; }
.z2 span + span { background: #f4f4f4; }
.cluster { position: absolute; left: 14px; top: 189px; display: flex; gap: 3px; align-items: center; }
.pin { position: absolute; left: 348px; top: 119px; }
.n377 { position: absolute; left: 293px; top: 231px; }
.attr { position: absolute; right: 0; bottom: 0; height: 16px; padding: 0 5px; background: rgba(255,255,255,.7); font-size: 11px; line-height: 16px; color: #333; white-space: nowrap; }
.attr a { color: #0078a8; }
.cap { font-size: 12px; line-height: 16px; color: #777; margin: 1px 0 0 134px; white-space: nowrap; }
.scroll { position: absolute; right: 1px; top: 118px; width: 3px; height: 621px; background: #7d8280; border-radius: 2px; }

.gh { flex: 1; min-height: 0; background: #212830; padding: 0 16px; overflow: hidden; color: #d1d7e0; }
.gh-box { border: solid #3d444d; border-width: 0 1px; height: 100%; }
.gh-top { height: 49px; background: #262c36; border-bottom: 1px solid #3d444d; display: flex; align-items: center; padding: 0 17px 0 16px; font-size: 14px; }
.tree { position: relative; }
.tree::after { content: ""; position: absolute; left: 11px; top: -3px; width: 8px; height: 8px; border-radius: 4px; background: #316dca; }
.branch { margin-left: 12px; width: 105px; height: 32px; border: 1px solid #3d444d; border-radius: 6px; background: #2a313c; display: flex; align-items: center; padding-left: 13px; }
.branch span { margin-left: 9px; width: 31px; letter-spacing: -.2px; }
.branch i { margin-left: 11px; border: 4px solid transparent; border-top-color: #9198a1; margin-top: 4px; }
.gh-top a { color: #478be6; font-weight: 700; margin-left: 9px; letter-spacing: -.25px; }
.gh-top b { letter-spacing: -.25px; }
.sl { width: 5px; margin: 0 4px 0 5px; color: #9198a1; }
.top { margin-left: auto; font-size: 12px; display: flex; align-items: center; gap: 5px; }
.md { padding: 10px 31px 0 32px; font-size: 16px; line-height: 24px; white-space: nowrap; letter-spacing: -.292px; }
.md b { letter-spacing: -.22px; }
.md > ul { padding-left: 64px; list-style: circle; }
.u1 > li + li { margin-top: 4px; }
.u2 { padding-left: 32px; list-style: square; padding-top: 1px; }
.u2 li + li { margin-top: 4px; }
.md > ol { padding-left: 32px; margin-top: 16px; }
.o1 > li + li { margin-top: 16px; }
.o2 { padding-left: 32px; list-style: lower-roman; }
.o2 li { margin-top: 16px; }
.o2 li.sp { margin-top: 17px; }
.md p { margin-top: 16px; }
.code { margin: 16px 0 0; height: 91px; background: #262c36; display: flex; padding: 17px 16px 16px; gap: 13px; }
.code pre { width: 843px; overflow: hidden; font: 13.600px/19.700px "DejaVu Sans Mono", monospace; letter-spacing: 0; }
.code svg { margin-top: -3px; }
```
